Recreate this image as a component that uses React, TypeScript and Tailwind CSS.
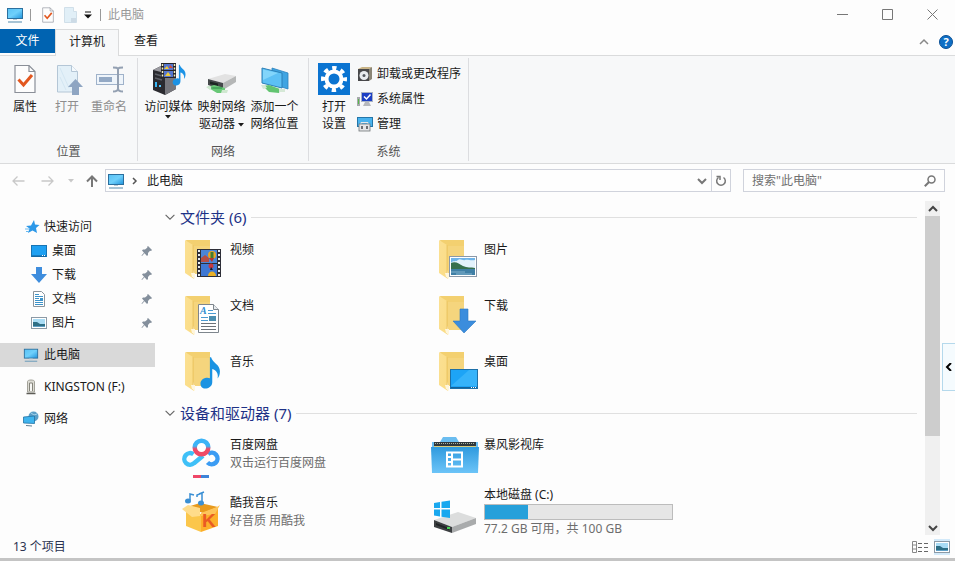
import { useState, type ReactNode } from 'react';

type IconProps = { className?: string };

function MonitorIcon({ className = 'h-[18px] w-[18px]' }: IconProps) {
  return (
    <svg viewBox="0 0 18 18" className={className}>
      <defs>
        <linearGradient id="screen" x1="0" y1="0" x2="1" y2="1">
          <stop offset="0" stopColor="#58c1f5" />
          <stop offset=".5" stopColor="#6fd0fb" />
          <stop offset="1" stopColor="#1f93dc" />
        </linearGradient>
      </defs>
      <rect x="1.5" y="2.5" width="15" height="10" fill="url(#screen)" stroke="#2b6f9e" />
      <path d="M7 13.5h4" stroke="#b9cbd6" />
      <path d="M2 16h14" stroke="#6f9dba" strokeWidth="1.2" />
    </svg>
  );
}

function CheckDocIcon({ className }: IconProps) {
  return (
    <svg viewBox="0 0 22 30" className={className}>
      <path d="M1 1.5h14l6 6v21H1z" fill="#fdfdfd" stroke="#8a8f98" strokeWidth="1.2" />
      <path d="M15 1.5v6h6" fill="none" stroke="#8a8f98" strokeWidth="1.2" />
      <path d="M4.500 15.500l5 5.500 8.500-10" fill="none" stroke="#e2571f" strokeWidth="3" />
    </svg>
  );
}

function OpenDocIcon() {
  return (
    <svg viewBox="0 0 32 32" className="h-8 w-8">
      <path d="M6.500 2.500h14l6 6v20.500h-20z" fill="#e3f0f8" stroke="#b4c6d6" />
      <path d="M20.500 2.500v6h6" fill="#f5fafd" stroke="#b4c6d6" />
      <path d="M9 5l9 20M9 14l6 13" stroke="#d3e6f2" />
      <path d="M24.500 16l7.500 8h-4v8h-7v-8h-4z" fill="#8ea5c2" />
    </svg>
  );
}

function RenameIcon() {
  return (
    <svg viewBox="0 0 32 32" className="h-8 w-8">
      <rect x="3.500" y="11.500" width="27" height="10" fill="#eef4fa" stroke="#9fb2ca" />
      <rect x="6" y="14" width="13" height="5" fill="#93a9c5" />
      <path d="M20 4.500c3 0 5 0 5 2v19c0 2-2 3-5 3M30 4.500c-3 0-5 0-5 2v19c0 2 2 3 5 3" fill="none" stroke="#93a0b2" strokeWidth="2" />
    </svg>
  );
}

const notePath = 'M6 1c1.500 5 7.500 6 7.500 12 0 3-1 5-2 6 1-4-1-7-4.500-8v11c0 3-2 5-5 5.500S-3 26-3 23.500s2-4.500 5-5c1-.2 2 0 3 .3V1z';

function MediaServerIcon() {
  return (
    <svg viewBox="0 0 34 32" className="h-8 w-[34px]">
      <path d="M1 7l8-4 15 2v21l-11 6L1 27z" fill="#2b2b30" />
      <path d="M13 10l11-4v20l-11 6z" fill="#77777d" />
      <path d="M1 7l8-4 15 2-11 5z" fill="#9a9aa0" />
      <path d="M3 11l7 2M3 15l7 2" stroke="#5d6068" strokeWidth="1.5" />
      <rect x="3" y="19" width="2" height="5" fill="#36b6f5" />
      <rect x="7" y="22" width="2" height="2" fill="#54c9ff" />
      <rect x="9" y="0" width="15" height="15" fill="#25242b" />
      <path d="M10.500 1v14M22.500 1v14" stroke="#f4efc0" strokeWidth="1.500" strokeDasharray="2 1.500" />
      <rect x="12" y="1" width="9" height="6" fill="#5576cf" />
      <rect x="12" y="8" width="9" height="6" fill="#5576cf" />
      <path d="M12 6l3-3 2 3zM13 13l3-4 3 4z" fill="#efcb3c" />
      <path d="M18 2l3 3h-4z" fill="#d44b32" />
      <g transform="translate(23 1) scale(.78)">
        <path d={notePath} fill="#1c93e6" />
      </g>
    </svg>
  );
}

function MapDriveIcon() {
  return (
    <svg viewBox="0 0 34 32" className="h-8 w-[34px]">
      <path d="M3 16l17-5 11 2-13 7z" fill="#e2e2e2" />
      <path d="M3 16l15 4v7L3 22z" fill="#44484a" />
      <path d="M18 20l13-7v6l-13 8z" fill="#b5b7b7" />
      <path d="M5 18.500l8 2v2.500l-8-2z" fill="#1c2522" />
      <path d="M2 24l7-2 11 3v5l-8 0z" fill="#68c877" />
      <path d="M1 24l4-1 3 2-3 2zM16 30l6 0 1-3h-6z" fill="#cfe8d0" />
      <path d="M6 25h11" stroke="#3f9f55" strokeWidth="1.500" />
    </svg>
  );
}

function AddLocationIcon() {
  return (
    <svg viewBox="0 0 34 32" className="h-8 w-[34px]">
      <path d="M14 5l16 5v16l-16-5z" fill="#3fa4e2" stroke="#2b82bd" strokeWidth=".8" />
      <path d="M4 5l20 5v15L4 20z" fill="#5cc0f5" stroke="#2b7fb6" strokeWidth="1" />
      <path d="M5 6.500L20 10 5 17z" fill="#82d5fb" />
      <path d="M5 23l6-1 11 4-1 4-10-1z" fill="#62c471" />
      <path d="M3 22l4 0 2 3-4 1zM21 26l6 0v3h-6z" fill="#d5e8d6" />
    </svg>
  );
}

function SettingsIcon() {
  return (
    <svg viewBox="0 0 32 32" className="h-8 w-8">
      <rect width="32" height="32" fill="#0b74d1" />
      <circle cx="16" cy="16" r="7.500" fill="none" stroke="#fff" strokeWidth="4" />
      <circle cx="16" cy="16" r="11" fill="none" stroke="#fff" strokeWidth="4" strokeDasharray="4.320 4.320" strokeDashoffset="2.160" />
    </svg>
  );
}

function UninstallIcon() {
  return (
    <svg viewBox="0 0 16 16" className="h-4 w-4">
      <path d="M1 3l4-2h10l-3 2z" fill="#c9b487" />
      <path d="M12 3l3-2v12l-3 2z" fill="#8a8576" />
      <rect x="1" y="3" width="11" height="12" fill="#48484a" />
      <circle cx="7" cy="9.500" r="4.500" fill="#e8ebee" />
      <circle cx="7" cy="9.500" r="1.500" fill="#53585e" />
    </svg>
  );
}

function SystemPropsIcon() {
  return (
    <svg viewBox="0 0 16 16" className="h-4 w-4">
      <rect x="0" y="6" width="3" height="9" fill="#a7a9ad" />
      <rect x="1" y="8" width="1" height="5" fill="#57b947" />
      <rect x="4" y="1" width="12" height="10" fill="#a9b2c4" />
      <rect x="5" y="2" width="10" height="8" fill="#1c3fc4" />
      <path d="M7 5.500l2.500 2.500L13.500 3.500" fill="none" stroke="#fff" strokeWidth="1.500" />
      <path d="M8 11h4l2 4H6z" fill="#b6b8bc" />
    </svg>
  );
}

function ManageIcon() {
  return (
    <svg viewBox="0 0 16 16" className="h-4 w-4">
      <rect x=".5" y="1.500" width="15" height="9" fill="#49b3ee" stroke="#2476a9" />
      <path d="M4 8V6.500h7V8" fill="none" stroke="#e8e8e8" />
      <rect x="2" y="8" width="11" height="7" fill="#e4e6e8" stroke="#717679" strokeWidth=".8" />
      <path d="M5 10v3M10 10v3" stroke="#44484c" strokeWidth="1.500" />
    </svg>
  );
}

function StarIcon() {
  return (
    <svg viewBox="0 0 16 16" className="h-4 w-4">
      <path d="M10 1l1 4.500 4.500.500-3.500 3 1 5-4.500-2.500L4 14l1.500-4.500L2 7l5-.5z" fill="#2c98e8" />
      <path d="M1 10h4M2 12.500h3" stroke="#6bb9ef" />
    </svg>
  );
}

function DesktopIcon() {
  return (
    <svg viewBox="0 0 16 16" className="h-4 w-4">
      <rect x=".5" y="2.500" width="15" height="11" fill="#1ea0f2" stroke="#1774b4" />
      <path d="M1 13h14" stroke="#115a91" />
      <path d="M11 12.500h1M13 12.500h1" stroke="#fff" />
    </svg>
  );
}

function DownloadIcon() {
  return (
    <svg viewBox="0 0 16 16" className="h-4 w-4">
      <path d="M5 0h6v7h5l-8 9-8-9h5z" fill="#3e8ddd" />
    </svg>
  );
}

function DocIcon() {
  return (
    <svg viewBox="0 0 16 16" className="h-4 w-4">
      <path d="M2.500.5h8l3 3v12h-11z" fill="#fff" stroke="#8b949c" />
      <path d="M4 3.500h4M4 5.500h8M4 7.500h4M4 9.500h8M4 11.500h8M4 13.500h8" stroke="#3d93c9" />
      <rect x="9" y="7" width="3" height="2" fill="#3d93c9" />
    </svg>
  );
}

function PictureIcon() {
  return (
    <svg viewBox="0 0 16 16" className="h-4 w-4">
      <rect x=".5" y="2.500" width="15" height="11" fill="#fff" stroke="#8c9aa6" />
      <rect x="2" y="4" width="12" height="8" fill="#a9dcf5" />
      <path d="M2 7l4 0 3 2h5v3H2z" fill="#2e6f86" />
      <path d="M2 11h12v1H2z" fill="#5e9fc6" />
    </svg>
  );
}

function UsbIcon() {
  return (
    <svg viewBox="0 0 16 16" className="h-4 w-4">
      <path d="M4.500 13V2.500c0-2 7-2 7 0V13z" fill="#dddcd5" stroke="#a3a299" />
      <path d="M6.500 12V4h3v8" fill="#f7f7f4" stroke="#85847b" />
      <path d="M3.500 14.500h9" stroke="#5d5c56" strokeWidth="1.500" />
    </svg>
  );
}

function NetworkIcon() {
  return (
    <svg viewBox="0 0 16 16" className="h-4 w-4">
      <circle cx="10.500" cy="5.500" r="5" fill="#5b9fc8" />
      <path d="M8 2l3 2 3-1" stroke="#a5d2ea" fill="none" />
      <path d="M.5 6l11-1v7.500l-11-.5z" fill="#3fb4ee" stroke="#2272a5" strokeWidth=".8" />
      <path d="M3 14.500l6 .5" stroke="#5d7d92" />
    </svg>
  );
}

function PinIcon() {
  return (
    <svg viewBox="0 0 12 12" className="h-3 w-3">
      <path d="M7 1l4 4-1 1-1-.3L7 8v2L6 11 3.500 8.300 1 11l-.5-.5L3 7.700 1 5.500l1-1h2l2.500-2L6 2z" fill="#848f9c" />
    </svg>
  );
}

// Open folder with room for an overlay in its lower right corner
function FolderIcon({ children }: { children: ReactNode }) {
  return (
    <svg viewBox="0 0 48 48" className="h-12 w-12 shrink-0">
      <defs>
        <linearGradient id="folderFront" x1="0" y1="0" x2="1" y2="1">
          <stop offset="0" stopColor="#fbe093" />
          <stop offset="1" stopColor="#fbdc84" />
        </linearGradient>
      </defs>
      <path d="M9 5h24v34H17z" fill="#f3d070" />
      <path d="M17 11h16v28H17z" fill="#f5d57d" />
      <path d="M8 5l8 5v30l1 4-9-6z" fill="url(#folderFront)" />
      <path d="M16 10v33" stroke="#e8c161" strokeWidth=".8" />
      <path d="M14 38h4v6l-3-2z" fill="#fff6dc" />
      {children}
    </svg>
  );
}

function VideoOverlay() {
  return (
    <>
      <rect x="20" y="14" width="24" height="28" fill="#2e2f38" />
      <path d="M22 15v27M42 15v27" stroke="#e9edf0" strokeWidth="2" strokeDasharray="2 2" />
      <rect x="24" y="15" width="16" height="13" fill="#4a86d8" />
      <rect x="24" y="29" width="16" height="12" fill="#3f78d3" />
      <path d="M24 23l4-3 4 3v4h-8z" fill="#b54f45" />
      <circle cx="35" cy="20" r="4" fill="#e8a524" />
      <path d="M33.500 17v6.500h3V17" fill="#437c32" />
      <path d="M32 23h5l-2 4z" fill="#ba362b" />
      <circle cx="34" cy="31" r="2.500" fill="#c63a42" />
      <path d="M34 32l2 3h-3z" fill="#14192b" />
      <path d="M31 41c0-6 8-6 8 0z" fill="#e9b027" />
    </>
  );
}

function DocOverlay() {
  return (
    <>
      <path d="M21.500 13.500h15l5 5v23h-20z" fill="#fff" stroke="#7e868d" />
      <path d="M36.500 13.500v5h5" fill="#e8ecef" stroke="#7e868d" />
      <text x="23" y="23" fontSize="10" fontStyle="italic" fontWeight="700" fontFamily="Liberation Serif, serif" fill="#2f8dd0">A</text>
      <path d="M31 19.500h5M31 22.500h8M24 26.500h7M24 29.500h7" stroke="#4c9bd2" />
      <path d="M24 32.500h15M24 35.500h15M24 38.500h15" stroke="#6c7278" />
      <rect x="32" y="25" width="7" height="5" fill="#4c8fb0" />
    </>
  );
}

function PictureOverlay() {
  return (
    <>
      <rect x="18.500" y="21.500" width="27" height="20" fill="#fff" stroke="#8a98a8" />
      <rect x="20" y="23" width="24" height="17" fill="#6fb4e8" />
      <path d="M20 28c2-3 5-1 7-3s5 1 7 0 6 1 10 0v9H20z" fill="#e3f2fc" />
      <path d="M20 28c5-2 8 1 12 3s8 1 12 2v2H20z" fill="#37704e" />
      <rect x="20" y="34" width="24" height="6" fill="#3f7fa5" />
      <path d="M20 37h14M25 39h16" stroke="#84b5cf" />
    </>
  );
}

function DownloadOverlay() {
  return <path d="M29 18h8v12h8L33 42 22 30h7z" fill="#3b8ddd" stroke="#2e78c2" strokeWidth=".6" />;
}

function MusicOverlay() {
  return (
    <g transform="translate(27 9) scale(1.18)">
      <path d={notePath} fill="#1b93e2" />
    </g>
  );
}

function DesktopOverlay() {
  return (
    <>
      <rect x="19.500" y="22.500" width="27" height="19" fill="#1da4f6" stroke="#1d70a8" />
      <path d="M20 39l18-16h8v16z" fill="#36b3fa" />
      <path d="M20 40.500h26" stroke="#12639c" />
      <path d="M40 40.500h1M42 40.500h1M44 40.500h1" stroke="#fff" />
    </>
  );
}

function BaiduIcon() {
  return (
    <svg viewBox="0 0 48 48" className="h-12 w-12 shrink-0" fill="none">
      <defs>
        <linearGradient id="baiduTop" x1="0" y1="0" x2="0" y2="1">
          <stop offset=".4" stopColor="#3cb4f7" />
          <stop offset=".6" stopColor="#ef4a66" />
        </linearGradient>
      </defs>
      <path d="M17 33.200a5.800 5.800 0 1 1-.5-9M17 33.200l9-7.500" stroke="#3fc0f7" strokeWidth="4.500" />
      <path d="M30.500 32.500a5.800 5.800 0 1 0 .5-8.500" stroke="#3b9cf3" strokeWidth="4.500" />
      <circle cx="24.500" cy="17.500" r="6.800" stroke="url(#baiduTop)" strokeWidth="4.500" fill="#fff" />
      <path d="M16 46.500h8" stroke="#ef4768" strokeWidth="3" />
      <path d="M24 46.500h8" stroke="#3d84d8" strokeWidth="3" />
    </svg>
  );
}

function KuwoIcon() {
  return (
    <svg viewBox="0 0 48 48" className="h-12 w-12 shrink-0">
      <path d="M10 19l13-4 18 4-15 6z" fill="#e89a1d" />
      <path d="M9 22l15 4v18L9 38z" fill="#fbc64b" />
      <path d="M24 26l17-6v18l-17 6z" fill="#fdaf2b" />
      <path d="M5 21l6-4 12 3v8l-8 1z" fill="#ffdc8b" />
      <path d="M24 25l16-6 3-2-5 9-14 2z" fill="#fec45a" />
      <text x="25" y="39" fontSize="19" fontWeight="900" fontFamily="Liberation Sans, sans-serif" fill="#e95a24">K</text>
      <g fill="none" stroke="#3a8fd4" strokeWidth="1.500">
        <path d="M13 12V6l4 1M25 14V5l-5 2v2M22 6l5-2" />
      </g>
      <ellipse cx="11" cy="13" rx="3" ry="2.500" fill="#3a8fd4" />
      <ellipse cx="24" cy="15" rx="3" ry="2.500" fill="#3a8fd4" />
    </svg>
  );
}

function BaofengIcon() {
  return (
    <svg viewBox="0 0 48 48" className="h-12 w-12 shrink-0">
      <defs>
        <linearGradient id="baofeng" x1="0" y1="0" x2="0" y2="1">
          <stop offset="0" stopColor="#2f9ade" />
          <stop offset="1" stopColor="#6cc4f8" />
        </linearGradient>
      </defs>
      <path d="M1 12h8l3-5h13l3 5h19v8H1z" fill="#6bbdf0" />
      <rect x="3" y="12" width="42" height="5" fill="#30373b" />
      <path d="M4 13.500h40" stroke="#a9b4a2" strokeDasharray="1 1" />
      <path d="M3 16.500h42" stroke="#d8cb7c" />
      <path d="M0 17h48l-1 26H1z" fill="url(#baofeng)" />
      <g fill="none" stroke="#fff" strokeWidth="2">
        <path d="M16 22.500h15v14H16zM21 22v15M21 29.500h10M16 27h5M16 32h5" />
      </g>
    </svg>
  );
}

function DriveIcon() {
  return (
    <svg viewBox="0 0 48 48" className="h-12 w-12 shrink-0">
      <path d="M3 32l24-8 18 6-24 9z" fill="#dcdddd" />
      <path d="M3 32l18 7v6L3 39z" fill="#3c3f41" />
      <path d="M21 39l24-9v6l-24 9z" fill="#a9abac" />
      <path d="M5 35l13 5v2L5 37z" fill="#202325" />
      <rect x="16" y="39" width="3" height="2" fill="#46d354" />
      <g fill="#19a8ef">
        <path d="M3 15l6-1v6H3zM10.500 13.700L19 12.500V20h-8.500zM3 21.500h6v7l-6-1zM10.500 21.500H19V30l-8.500-1.300z" />
      </g>
    </svg>
  );
}

function Chevron({ className, d = 'M1 2l4 4 4-4', width = 1.5 }: { className?: string; d?: string; width?: number }) {
  return (
    <svg viewBox="0 0 10 8" className={`h-2 w-2.5 ${className ?? ''}`}>
      <path d={d} fill="none" stroke="currentColor" strokeWidth={width} />
    </svg>
  );
}

function Caret() {
  return (
    <svg viewBox="0 0 6 4" className="inline-block h-1 w-1.5">
      <path d="M0 0h6L3 3.500z" fill="currentColor" />
    </svg>
  );
}

function RibbonGroup({ label, children }: { label: string; children: ReactNode }) {
  return (
    <section className="my-0.5 flex flex-col justify-between border-r border-[#dcdde0]">
      <div className="flex pl-1 pr-[7px] pt-[5px]">{children}</div>
      <h2 className="pb-px text-center text-[#555]">{label}</h2>
    </section>
  );
}

type RibbonButtonProps = { icon: ReactNode; children: ReactNode; className?: string; disabled?: boolean };

function RibbonButton({ icon, children, className = 'w-[42px]', disabled }: RibbonButtonProps) {
  return (
    <button disabled={disabled} className={`flex flex-col items-center gap-[3px] whitespace-nowrap leading-[17px] disabled:text-[#8d8d8d] ${className}`}>
      {icon}
      <span className="text-center">{children}</span>
    </button>
  );
}

const quickAccess = [
  { name: '桌面', icon: <DesktopIcon /> },
  { name: '下载', icon: <DownloadIcon /> },
  { name: '文档', icon: <DocIcon /> },
  { name: '图片', icon: <PictureIcon /> },
];

const places = [
  { name: '此电脑', icon: <MonitorIcon className="h-4 w-4" /> },
  { name: 'KINGSTON (F:)', icon: <UsbIcon /> },
  { name: '网络', icon: <NetworkIcon /> },
];

const folders = [
  { name: '视频', overlay: <VideoOverlay /> },
  { name: '图片', overlay: <PictureOverlay /> },
  { name: '文档', overlay: <DocOverlay /> },
  { name: '下载', overlay: <DownloadOverlay /> },
  { name: '音乐', overlay: <MusicOverlay /> },
  { name: '桌面', overlay: <DesktopOverlay /> },
];

type Device = { name: string; icon: ReactNode; note?: string; used?: number };

const devices: Device[] = [
  { name: '百度网盘', icon: <BaiduIcon />, note: '双击运行百度网盘' },
  { name: '暴风影视库', icon: <BaofengIcon /> },
  { name: '酷我音乐', icon: <KuwoIcon />, note: '好音质 用酷我' },
  { name: '本地磁盘 (C:)', icon: <DriveIcon />, note: '77.2 GB 可用，共 100 GB', used: 23 },
];

function SectionHeader({ title }: { title: string }) {
  return (
    <h2 className="flex h-6 items-center gap-[5px] text-[15px] text-[#1e3287]">
      <button aria-label={title} className="flex text-[#666]">
        <Chevron width={1} className="scale-110" />
      </button>
      <span>{title}</span>
      <span className="h-px flex-1 bg-[#e0e0e0]" />
    </h2>
  );
}

function Tile({ icon, name, note, used }: Device) {
  return (
    <button className="flex items-center gap-[5px] text-left">
      {icon}
      <span className={`flex min-h-9 flex-col ${used === undefined ? 'leading-[18px]' : 'leading-4'}`}>
        <span>{name}</span>
        {used !== undefined && (
          <span role="progressbar" aria-label={name} aria-valuenow={used} className="my-px block h-4 w-[189px] border border-[#bcbcbc] bg-[#e6e6e6]">
            <span className="block h-full bg-[#26a0da]" style={{ width: `${used}%` }} />
          </span>
        )}
        {note && <span className="text-[#6d6d6d]">{note}</span>}
      </span>
    </button>
  );
}

export default function App() {
  const [selected, setSelected] = useState('此电脑');
  const [query, setQuery] = useState('');

  return (
    <div className="relative flex h-screen flex-col overflow-hidden bg-[#fdfdfd] font-['Noto_Sans','Noto_Sans_CJK_SC',sans-serif] text-xs text-[#1a1a1a]">
      <header className="flex h-[29px] items-center pl-1.5">
        <MonitorIcon />
        <span className="ml-1.5 h-3 w-px bg-[#999]" />
        <button aria-label="属性" className="ml-[11px]">
          <CheckDocIcon className="h-4 w-3" />
        </button>
        <button aria-label="新建文件夹" className="ml-2.5">
          <svg viewBox="0 0 13 16" className="h-4 w-[13px]">
            <path d="M.5.5h9v4h3v11H.5z" fill="#e1eff7" stroke="#d0dfe9" />
            <path d="M7 15.500V11h5v4.500" fill="#cddbe6" />
          </svg>
        </button>
        <button aria-label="自定义快速访问工具栏" className="ml-[7px]">
          <svg viewBox="0 0 8 8" className="h-2 w-2">
            <path d="M1 1h6" stroke="#111" />
            <path d="M0 3.500h8L4 7.500z" fill="#111" />
          </svg>
        </button>
        <span className="ml-2 h-3 w-px bg-[#999]" />
        <h1 className="ml-[7px] text-[#999]">此电脑</h1>
        <div className="ml-auto flex h-full text-[#777]">
          <button aria-label="最小化" className="flex w-[45px] items-center justify-center">
            <svg viewBox="0 0 11 11" className="h-[11px] w-[11px]"><path d="M0 5.500h11" stroke="currentColor" /></svg>
          </button>
          <button aria-label="最大化" className="flex w-[45px] items-center justify-center">
            <svg viewBox="0 0 11 11" className="h-[11px] w-[11px]"><path d="M.5.5h10v10H.5z" fill="none" stroke="currentColor" /></svg>
          </button>
          <button aria-label="关闭" className="flex w-[45px] items-center justify-center">
            <svg viewBox="0 0 11 11" className="h-[11px] w-[11px]"><path d="M.5.5l10 10M10.500.5l-10 10" stroke="currentColor" /></svg>
          </button>
        </div>
      </header>

      <nav className="flex h-[27px] border-b border-[#dadbdc]">
        <button className="h-6 w-[55px] bg-[#0063b1] text-white">文件</button>
        <button className="-mb-px w-16 border-x border-t border-[#dadbdc] bg-[#f7f8f9] pb-0.5">计算机</button>
        <button className="w-[54px] pb-0.5">查看</button>
        <div className="ml-auto flex items-center gap-2.5 pr-0.5">
          <button aria-label="最小化功能区" className="text-[#888]">
            <Chevron d="M1 6l4-4 4 4" />
          </button>
          <button aria-label="帮助">
            <svg viewBox="0 0 14 14" className="h-3.5 w-3.5">
              <circle cx="7" cy="7" r="6.500" fill="#0f6fc5" stroke="#0a4f94" />
              <text x="7" y="11" fontSize="11" fontWeight="700" textAnchor="middle" fill="#fff">?</text>
            </svg>
          </button>
        </div>
      </nav>

      <div className="flex h-[108px] border-b border-[#dadbdc] bg-[#f7f8f9]">
        <RibbonGroup label="位置">
          <RibbonButton icon={<span className="flex h-8 items-center"><CheckDocIcon className="h-[30px] w-[22px]" /></span>}>属性</RibbonButton>
          <RibbonButton icon={<OpenDocIcon />} disabled>打开</RibbonButton>
          <RibbonButton icon={<RenameIcon />} disabled>重命名</RibbonButton>
        </RibbonGroup>
        <RibbonGroup label="网络">
          <RibbonButton icon={<MediaServerIcon />} className="w-[53px]">
            访问媒体
            <span className="flex h-1 items-center justify-center"><Caret /></span>
          </RibbonButton>
          <RibbonButton icon={<MapDriveIcon />} className="w-[53px]">
            映射网络<br />
            驱动器 <span className="inline-flex align-middle"><Caret /></span>
          </RibbonButton>
          <RibbonButton icon={<AddLocationIcon />} className="w-[53px]">
            添加一个<br />网络位置
          </RibbonButton>
        </RibbonGroup>
        <RibbonGroup label="系统">
          <RibbonButton icon={<SettingsIcon />}>
            打开<br />设置
          </RibbonButton>
          <div className="flex flex-col gap-[7px] pt-0.5 leading-[18px]">
            <button className="flex items-center gap-1 pl-0.5"><UninstallIcon />卸载或更改程序</button>
            <button className="flex items-center gap-1 pl-0.5"><SystemPropsIcon />系统属性</button>
            <button className="flex items-center gap-1 pl-0.5"><ManageIcon />管理</button>
          </div>
        </RibbonGroup>
      </div>

      <div className="flex h-[33px] items-center pr-2.5">
        <div className="flex w-[105px] items-center pl-3">
          <button aria-label="后退" disabled className="text-[#c8c8c8]">
            <svg viewBox="0 0 13 12" className="h-3 w-[13px]"><path d="M12.500 6H1M5.500 1.500L1 6l4.500 4.500" fill="none" stroke="currentColor" strokeWidth="1.300" /></svg>
          </button>
          <button aria-label="前进" disabled className="ml-4 text-[#c8c8c8]">
            <svg viewBox="0 0 13 12" className="h-3 w-[13px]"><path d="M.5 6H12M7.500 1.500L12 6l-4.500 4.500" fill="none" stroke="currentColor" strokeWidth="1.300" /></svg>
          </button>
          <button aria-label="最近浏览的位置" disabled className="ml-3.5 flex text-[#c8c8c8]"><Caret /></button>
          <button aria-label="向上" className="ml-3 text-[#777]">
            <svg viewBox="0 0 12 12" className="h-3 w-3"><path d="M6 12V1.500M1 6.500l5-5 5 5" fill="none" stroke="currentColor" strokeWidth="2" /></svg>
          </button>
        </div>
        <div className="flex h-[23px] flex-1 items-center border border-[#d0d3dc] bg-[#fefefe] pl-px">
          <MonitorIcon />
          <Chevron d="M4 1l3 3-3 3" className="ml-1 text-[#555]" />
          <button className="ml-2">此电脑</button>
          <button aria-label="以前的位置" className="ml-auto flex px-1 text-[#777]"><Chevron width={2} /></button>
          <button aria-label="刷新" className="flex h-full items-center border-l border-[#d0d3dc] px-[3px] text-[#777]">
            <svg viewBox="0 0 12 12" className="h-3 w-3">
              <path d="M8.500 2.500A4.300 4.300 0 1 1 3.500 2.500M1.500 1.500h3.500v3.500" fill="none" stroke="currentColor" strokeWidth="1.500" />
            </svg>
          </button>
        </div>
        <div className="ml-3 flex h-[23px] w-[202px] items-center border border-[#d0d3dc] bg-[#fefefe] px-2">
          <input
            aria-label="搜索此电脑"
            value={query}
            onChange={e => setQuery(e.target.value)}
            placeholder={'搜索"此电脑"'}
            className="min-w-0 flex-1 outline-none placeholder:text-[#707070]"
          />
          <svg viewBox="0 0 12 12" className="h-3 w-3">
            <circle cx="7.500" cy="4.500" r="3.500" fill="none" stroke="#777" strokeWidth="1.500" />
            <path d="M5 7L.8 11.200" stroke="#777" strokeWidth="2" />
          </svg>
        </div>
      </div>

      <div className="flex min-h-0 flex-1">
        <aside className="w-[155px] shrink-0 pt-[18px]">
          <button className="flex h-6 w-full items-center gap-1 pl-6"><StarIcon />快速访问</button>
          {quickAccess.map(item => (
            <button key={item.name} className="flex h-6 w-full items-center gap-[5px] pl-[31px] pr-0.5">
              {item.icon}
              {item.name}
              <span className="ml-auto"><PinIcon /></span>
            </button>
          ))}
          {places.map(place => (
            <button
              key={place.name}
              onClick={() => setSelected(place.name)}
              className={`mt-2 flex h-6 w-full items-center gap-[5px] pl-[23px] ${selected === place.name ? 'bg-[#d9d9d9]' : ''}`}
            >
              {place.icon}
              {place.name}
            </button>
          ))}
        </aside>

        <main className="flex min-w-0 flex-1 flex-col gap-0.5 overflow-hidden pl-2.5 pr-2 pt-2">
          <section>
            <SectionHeader title="文件夹 (6)" />
            <div className="mt-0.5 grid auto-rows-[56px] grid-cols-[254px_254px] pl-3">
              {folders.map(folder => (
                <Tile key={folder.name} name={folder.name} icon={<FolderIcon>{folder.overlay}</FolderIcon>} />
              ))}
            </div>
          </section>
          <section>
            <SectionHeader title="设备和驱动器 (7)" />
            <div className="grid auto-rows-[58px] grid-cols-[254px_254px] pl-3">
              {devices.map(device => (
                <Tile key={device.name} {...device} />
              ))}
            </div>
          </section>
        </main>

        <div className="mb-0.5 mr-[15px] mt-1 flex w-[15px] shrink-0 flex-col items-center bg-[#f0f0f0] text-[#444]">
          <button aria-label="向上滚动" className="flex h-[15px] items-center"><Chevron d="M1 6l4-4 4 4" width={2} /></button>
          <div className="h-[66%] w-full bg-[#cdcdcd]" />
          <button aria-label="向下滚动" className="mt-auto flex h-[15px] items-center"><Chevron width={2} /></button>
        </div>
      </div>

      <footer className="flex h-6 items-center border-b-[3px] border-[#c4c4c4] pb-0.5 pl-[13px] pr-[5px] text-[#2b3350]">
        <span>13 个项目</span>
        <button aria-label="详细信息" className="ml-auto">
          <svg viewBox="0 0 16 14" className="h-3.5 w-4">
            <path d="M.5 1.500h4v11h-4zM.5 5h4M.5 9h4" fill="none" stroke="#888" />
            <path d="M6 3.500h4M12 3.500h4M6 7.500h4M12 7.500h4M6 11.500h4M12 11.500h4" stroke="#666" />
          </svg>
        </button>
        <button aria-label="大图标" className="ml-1.5 bg-[#d3eafa]"><PictureIcon /></button>
      </footer>

      <button aria-label="展开侧栏" className="absolute right-0 top-[343px] flex h-12 w-[13px] items-center justify-center border border-r-0 border-[#b5d9ec] bg-[#f5fbfe] text-black">
        <Chevron d="M7 0L3 4l4 4" width={2} />
      </button>
    </div>
  );
}
